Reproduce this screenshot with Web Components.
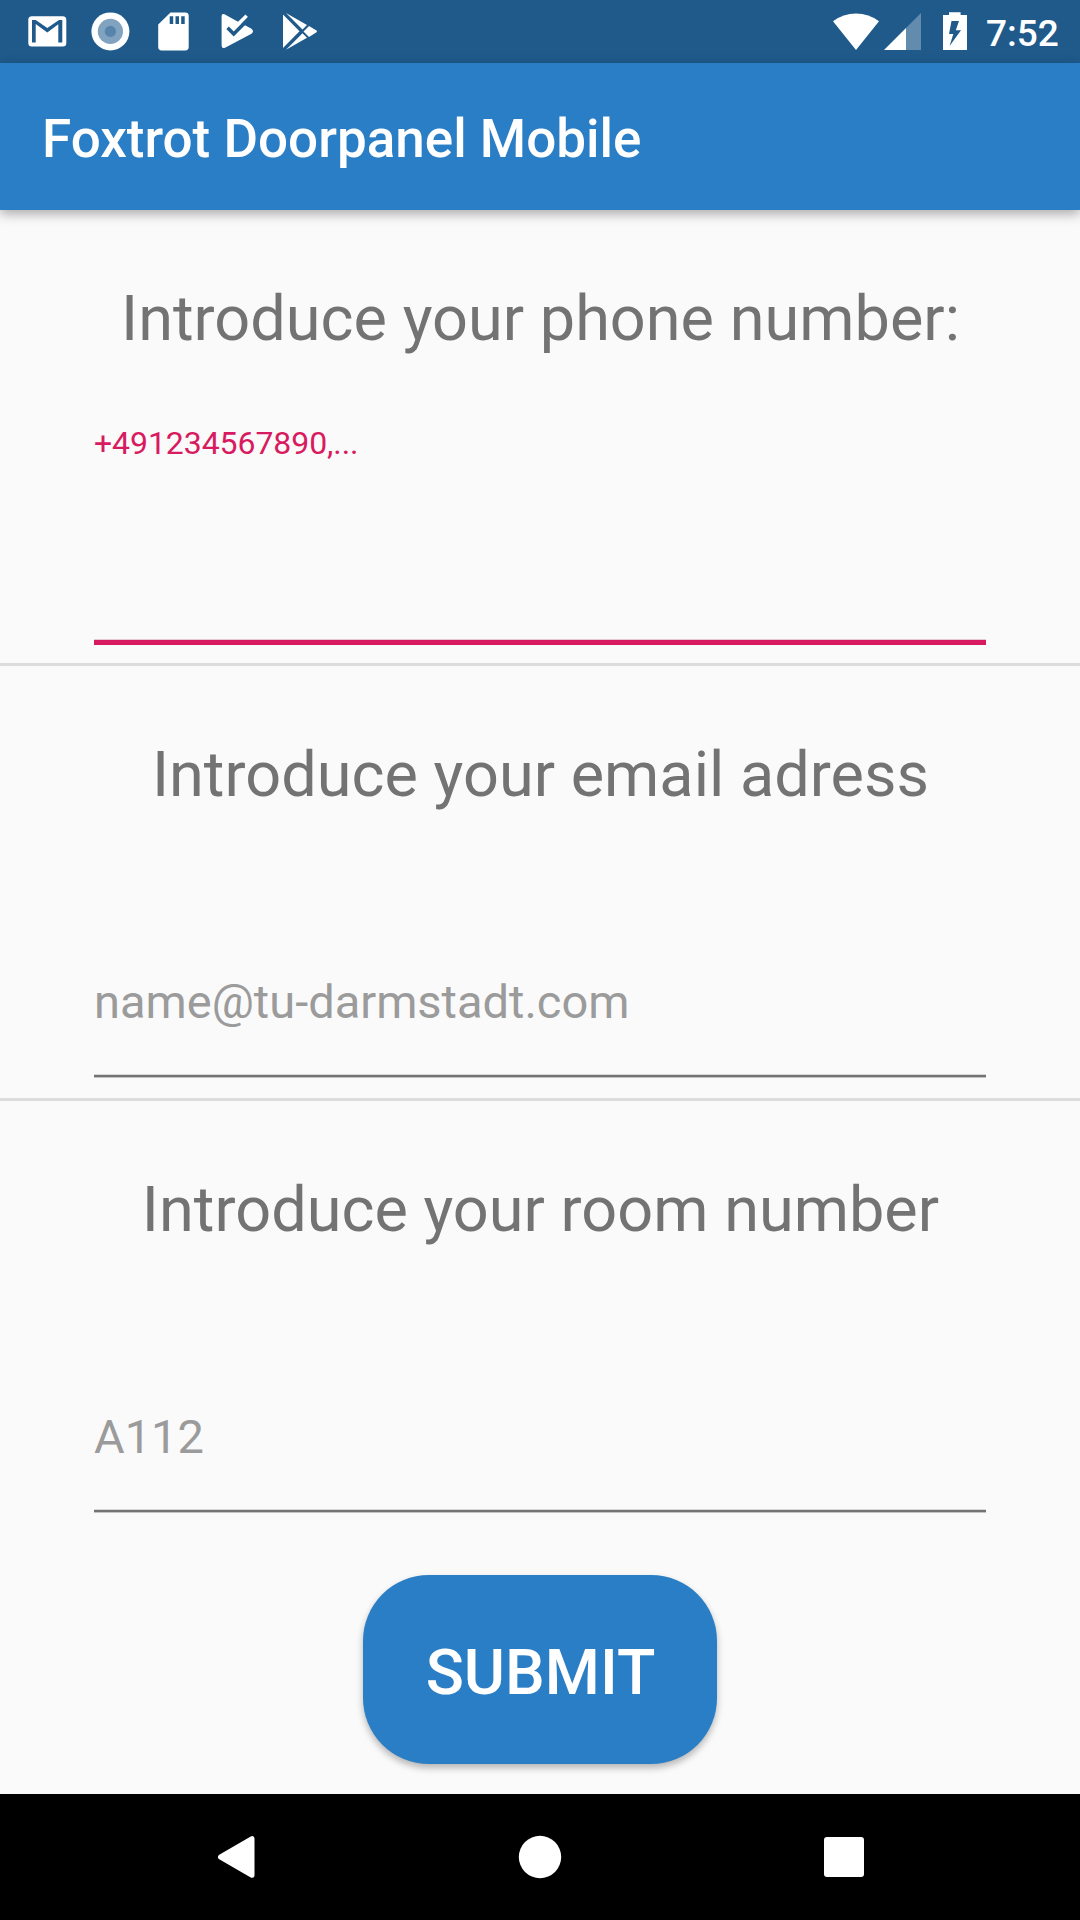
<!DOCTYPE html>
<html lang="en">
<head>
<meta charset="utf-8">
<title>Foxtrot Doorpanel Mobile</title>
<style>
html,body{margin:0;padding:0}
body{width:1080px;height:1920px;overflow:hidden;background:#fafafa;font-family:Roboto,"Noto Sans",sans-serif}
</style>
</head>
<body>
<door-app></door-app>
<script>
function define(name, html){
  const t=document.createElement('template');
  t.innerHTML=html;
  customElements.define(name, class extends HTMLElement{
    constructor(){super();this.attachShadow({mode:'open'}).appendChild(t.content.cloneNode(true));}
  });
}
define('status-bar',`
<style>
:host{display:flex;justify-content:space-between;height:63px;background:#1f5a8b;color:#fff}
.left,.right{display:flex}
.left{padding-left:15px}
svg{display:block;height:63px;flex:none}
.time{font-size:37px;font-weight:500;line-height:67px;width:94px}
</style>
<div class="left">
<svg width="63" viewBox="15 0 63 63"><rect x="28.3" y="16.2" width="38" height="30.4" rx="3.5" fill="#fff"/><path fill="#1f5a8b" d="M32 20H35.7L47.3 28 59 20H62.3V42.5H58.3V24.3L47.3 32.5 35.7 24V42.5H32Z"/></svg>
<svg width="63" viewBox="78 0 63 63"><circle cx="110.4" cy="31.4" r="19" fill="#fff"/><circle cx="110.4" cy="31.4" r="12.6" fill="#82a3c0"/><circle cx="110.4" cy="31.4" r="5.6" fill="#5684ab"/></svg>
<svg width="63" viewBox="141 0 63 63"><path fill="#fff" d="M170.5 12.6H185.3A3.4 3.4 0 0 1 188.7 16V47A3.4 3.4 0 0 1 185.3 50.4H161.6A3.4 3.4 0 0 1 158.2 47V24.5Z"/><path fill="#1f5a8b" d="M169.7 16.3h3.5v7.7h-3.5zM175.5 16.3h3.5v7.7h-3.5zM181.2 16.3h3.5v7.7h-3.5z"/></svg>
<svg width="63" viewBox="204 0 63 63"><path fill="#fff" d="M221.6 16Q221.6 13.3 224.5 14.2L238 21.8 245.5 14.5 248 17 241 24.3 245 25.3 251.5 28.7Q254.5 31 251.5 33.8L225 47.8Q221.6 49 221.6 45.5Z"/><path fill="none" stroke="#1f5a8b" stroke-width="3.6" d="M227.6 27.8L233.7 33.9 249.3 18.3"/></svg>
<svg width="63" viewBox="267 0 63 63"><path fill="#fff" d="M283 14.5L299.5 31.3 283 48ZM286 13L307 25 302.5 29.5ZM286 49.8L302.5 33.2 307 37.8ZM309 26L316.5 30.5Q317.5 31.3 316.5 32.2L309 37 303.5 31.4Z"/></svg>
</div>
<div class="right">
<svg width="186" viewBox="800 0 186 63"><path fill="#fff" d="M833 21.3A38 38 0 0 1 879 21.3L856 50Z"/><path fill="#fff" fill-opacity=".3" d="M906 28L921 13V50H906Z"/><path fill="#fff" d="M884 50L906 28V50Z"/><path fill="#fff" fill-rule="evenodd" d="M949 12.3h11.6v2.8h6.4v34.9h-24V15.1h6ZM951.5 21L949 34h4.3L949.6 46 961 30.3h-5.2L959 21Z"/></svg>
<div class="time">7:52</div>
</div>`);
define('app-bar',`
<style>
:host{display:flex;align-items:center;box-sizing:border-box;height:147px;padding:6px 42px 0;background:#2a7ec5;color:#fff;font-size:53px;font-weight:500;line-height:63px;box-shadow:0 4px 11px rgba(0,0,0,.32);z-index:1;position:relative}
</style><slot></slot>`);
define('form-section',`
<style>
:host{display:flex;flex-direction:column;box-sizing:border-box;height:435px;padding:72px 94px 0;border-bottom:3px solid #dcdcdc}
:host([tall]){height:456px}
:host([last]){border-bottom-color:transparent}
h2{margin:0;padding-left:1px;font-size:63px;font-weight:400;line-height:74px;letter-spacing:.02px;color:#737373;text-align:center;white-space:nowrap}
</style><h2><slot name="title"></slot></h2><slot></slot>`);
define('text-field',`
<style>
:host{display:flex;flex-direction:column;margin-top:162px;color:#9b9b9b;font-size:47px;line-height:56px}
.line{margin-top:44px;height:2px;background:#737373;border-top:1px solid #d8d8d8;border-bottom:1px solid #c3c3c3}
:host([focused]){margin-top:68px;color:#d81b60;font-size:32px;line-height:38px;letter-spacing:-.07px}
:host([focused]) .line{margin-top:177px;height:5px;background:#d81b60;border-top-color:#e6c9d4;border-bottom:0}
</style><slot></slot><div class="line"></div>`);
define('submit-button',`
<style>
:host{display:flex;justify-content:center;margin-top:39px}
button{font:500 63px/74px Roboto,"Noto Sans",sans-serif;color:#fff;background:#2a7ec5;border:0;border-radius:66px;width:354px;height:189px;padding:6px 0 0 1px;box-shadow:0 4px 7px rgba(0,0,0,.28)}
</style><button><slot></slot></button>`);
define('nav-bar',`
<style>
:host{display:flex;align-items:center;justify-content:space-between;height:126px;padding:0 205px;background:#000;margin-top:auto}
svg{display:block;width:62px;height:62px}
</style>
<svg viewBox="205 1826 62 62"><path fill="#fff" stroke="#fff" stroke-width="5" stroke-linejoin="round" d="M220.5 1857L252 1838.7V1875.3Z"/></svg>
<svg viewBox="509 1826 62 62"><circle cx="540" cy="1857" r="21.2" fill="#fff"/></svg>
<svg viewBox="813 1826 62 62"><rect x="824" y="1837" width="40" height="40" rx="3" fill="#fff"/></svg>`);
define('door-app',`
<style>:host{display:flex;flex-direction:column;width:1080px;height:1920px;background:#fafafa}</style>
<status-bar></status-bar>
<app-bar>Foxtrot Doorpanel Mobile</app-bar>
<form-section tall><span slot="title">Introduce your phone number:</span><text-field focused>+491234567890,...</text-field></form-section>
<form-section><span slot="title">Introduce your email adress</span><text-field>name@tu-darmstadt.com</text-field></form-section>
<form-section last><span slot="title">Introduce your room number</span><text-field>A112</text-field></form-section>
<submit-button>SUBMIT</submit-button>
<nav-bar></nav-bar>`);
</script>
</body>
</html>
